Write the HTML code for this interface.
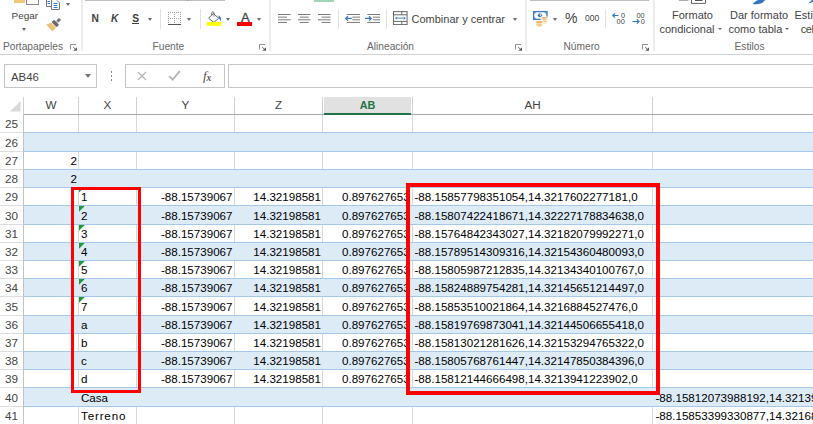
<!DOCTYPE html><html><head><meta charset="utf-8"><title>Excel</title><style>
html,body{margin:0;padding:0;background:#fff;}
body{width:813px;height:424px;overflow:hidden;position:relative;font-family:"Liberation Sans",sans-serif;color:#444;}
.a{position:absolute;}
.t{position:absolute;white-space:nowrap;line-height:1;}
.rb{font-size:11px;color:#444;}
.gl{font-size:10.2px;color:#666;}
.cell{font-size:11.6px;color:#000;}
.hd{font-size:11.7px;color:#444;}
.sep{position:absolute;width:1px;background:#e1e1e1;}
.gsep{position:absolute;width:1.7px;background:#ececec;}
.arr{position:absolute;width:0;height:0;border-left:2.7px solid transparent;border-right:2.7px solid transparent;border-top:3.2px solid #6a6a6a;margin:0.6px 0 0 0;}
</style></head><body>
<div class="a" style="left:0;top:54px;width:813px;height:1px;background:#d2d2d2"></div>
<div class="gsep" style="left:81px;top:0;height:50.5px"></div>
<div class="gsep" style="left:269px;top:0;height:50.5px"></div>
<div class="gsep" style="left:525px;top:0;height:50.5px"></div>
<div class="gsep" style="left:653px;top:0;height:50.5px"></div>
<div class="t gl" style="left:3px;top:42.3px;">Portapapeles</div>
<div class="t gl" style="left:152.5px;top:42.3px;">Fuente</div>
<div class="t gl" style="left:367px;top:42.3px;">Alineación</div>
<div class="t gl" style="left:563.5px;top:42.3px;">Número</div>
<div class="t gl" style="left:734.5px;top:42.3px;">Estilos</div>
<div class="t rb" style="left:11.5px;top:10.7px;font-size:9.95px">Pegar</div>
<div class="arr" style="left:21.6px;top:27.2px"></div>
<svg class="a" style="left:70.4px;top:44px" width="8" height="8" viewBox="0 0 8 8"><path d="M0.5 5.5V0.5H6" fill="none" stroke="#8f8f8f" stroke-width="1"/><path d="M7 3.2V6.8H3.4Z" fill="#5a5a5a"/><path d="M3.2 3L5.2 5" stroke="#5a5a5a" stroke-width="0.9"/></svg>
<svg class="a" style="left:258.9px;top:44px" width="8" height="8" viewBox="0 0 8 8"><path d="M0.5 5.5V0.5H6" fill="none" stroke="#8f8f8f" stroke-width="1"/><path d="M7 3.2V6.8H3.4Z" fill="#5a5a5a"/><path d="M3.2 3L5.2 5" stroke="#5a5a5a" stroke-width="0.9"/></svg>
<svg class="a" style="left:514.9px;top:44px" width="8" height="8" viewBox="0 0 8 8"><path d="M0.5 5.5V0.5H6" fill="none" stroke="#8f8f8f" stroke-width="1"/><path d="M7 3.2V6.8H3.4Z" fill="#5a5a5a"/><path d="M3.2 3L5.2 5" stroke="#5a5a5a" stroke-width="0.9"/></svg>
<svg class="a" style="left:642.4px;top:44px" width="8" height="8" viewBox="0 0 8 8"><path d="M0.5 5.5V0.5H6" fill="none" stroke="#8f8f8f" stroke-width="1"/><path d="M7 3.2V6.8H3.4Z" fill="#5a5a5a"/><path d="M3.2 3L5.2 5" stroke="#5a5a5a" stroke-width="0.9"/></svg>
<div class="a" style="left:13.8px;top:0;width:10.8px;height:2.6px;background:#f3c777"></div>
<div class="a" style="left:26px;top:-4.4px;width:10.6px;height:7px;border:1px solid #8a8a8a;background:#fff"></div>
<svg class="a" style="left:45px;top:0" width="18" height="11" viewBox="0 0 18 11"><path d="M1.5 0V6.5H6" fill="none" stroke="#777"/><path d="M6.5 0V9.5H14.5V3L12 0.5" fill="#fff" stroke="#777"/><path d="M8.5 3.5H12.5M8.5 5.5H12.5M8.5 7.5H12.5" stroke="#2b78c5"/><path d="M2.5 1.5H5M2.5 3.5H5" stroke="#2b78c5"/></svg>
<div class="arr" style="left:66px;top:2.2px"></div>
<svg class="a" style="left:44px;top:15px" width="20" height="18" viewBox="44 15 20 18"><g transform="translate(55.5 23.4) rotate(-45)"><path d="M-2.6 -3.9V3.4H-7.9L-7.4 -5.6Z" fill="#eec377"/><rect x="-2" y="-3.7" width="3.7" height="7.3" rx="1.2" fill="#6b6b6b"/><rect x="2.8" y="-1.5" width="3.6" height="3" rx="0.5" fill="#777"/><rect x="1.6" y="-0.7" width="1.6" height="1.4" fill="#999"/></g></svg>
<div class="a" style="left:85px;top:0;width:140px;height:1px;background:#bdbdbd"></div>
<div class="a" style="left:187px;top:0;width:1px;height:1px;background:#999"></div>
<div class="t rb" style="left:91.6px;top:13.6px;font-weight:bold;font-size:10.2px;color:#404040">N</div>
<div class="t rb" style="left:111px;top:13.6px;font-weight:bold;font-style:italic;font-size:10.2px;color:#404040">K</div>
<div class="t rb" style="left:132.3px;top:13.6px;font-weight:bold;font-size:10.2px;color:#404040">S</div>
<div class="a" style="left:132.2px;top:23.2px;width:6.8px;height:1px;background:#404040"></div>
<div class="arr" style="left:148px;top:17px"></div>
<div class="sep" style="left:160px;top:9px;height:20px"></div>
<svg class="a" style="left:168px;top:12px" width="13" height="13" viewBox="0 0 13 13" shape-rendering="crispEdges"><g fill="#a2a2a2"><rect x="0" y="0" width="1" height="1"/><rect x="0" y="0" width="1" height="1"/><rect x="0" y="6" width="1" height="1"/><rect x="6" y="0" width="1" height="1"/><rect x="0" y="12" width="1" height="1"/><rect x="12" y="0" width="1" height="1"/><rect x="2" y="0" width="1" height="1"/><rect x="0" y="2" width="1" height="1"/><rect x="2" y="6" width="1" height="1"/><rect x="6" y="2" width="1" height="1"/><rect x="2" y="12" width="1" height="1"/><rect x="12" y="2" width="1" height="1"/><rect x="4" y="0" width="1" height="1"/><rect x="0" y="4" width="1" height="1"/><rect x="4" y="6" width="1" height="1"/><rect x="6" y="4" width="1" height="1"/><rect x="4" y="12" width="1" height="1"/><rect x="12" y="4" width="1" height="1"/><rect x="6" y="0" width="1" height="1"/><rect x="0" y="6" width="1" height="1"/><rect x="6" y="6" width="1" height="1"/><rect x="6" y="6" width="1" height="1"/><rect x="6" y="12" width="1" height="1"/><rect x="12" y="6" width="1" height="1"/><rect x="8" y="0" width="1" height="1"/><rect x="0" y="8" width="1" height="1"/><rect x="8" y="6" width="1" height="1"/><rect x="6" y="8" width="1" height="1"/><rect x="8" y="12" width="1" height="1"/><rect x="12" y="8" width="1" height="1"/><rect x="10" y="0" width="1" height="1"/><rect x="0" y="10" width="1" height="1"/><rect x="10" y="6" width="1" height="1"/><rect x="6" y="10" width="1" height="1"/><rect x="10" y="12" width="1" height="1"/><rect x="12" y="10" width="1" height="1"/><rect x="12" y="0" width="1" height="1"/><rect x="0" y="12" width="1" height="1"/><rect x="12" y="6" width="1" height="1"/><rect x="6" y="12" width="1" height="1"/><rect x="12" y="12" width="1" height="1"/><rect x="12" y="12" width="1" height="1"/></g><rect x="0" y="11.5" width="13" height="1" fill="#555"/></svg>
<div class="arr" style="left:187px;top:17px"></div>
<div class="sep" style="left:199.5px;top:9px;height:20px"></div>
<svg class="a" style="left:206px;top:9px" width="17" height="17" viewBox="0 0 17 17"><path d="M12.6 6.2Q15.8 7.8 14.9 12.6Q13.8 10.2 12.6 9.6Z" fill="#3c78bd"/><path d="M2.6 9.2L7.4 4.4L12.6 9.2L7.8 13.6Z" fill="#fff" stroke="#666" stroke-width="1"/><path d="M5.8 6.5V3.4Q6.9 1.8 8 3.4V7.5" fill="none" stroke="#666" stroke-width="0.9"/><rect x="0.7" y="13" width="14.5" height="3.8" fill="#ffff00"/></svg>
<div class="arr" style="left:226.2px;top:17px"></div>
<div class="t rb" style="left:241px;top:10.5px;font-size:13px;color:#444;-webkit-text-stroke:0.3px #444">A</div>
<div class="a" style="left:237.4px;top:22px;width:14.6px;height:3.7px;background:#ff0000"></div>
<div class="arr" style="left:257.2px;top:17px"></div>
<div class="a" style="left:314px;top:0;width:20px;height:1.5px;background:#9fd5b7"></div>
<svg class="a" style="left:277.8px;top:14.2px" width="13" height="9" viewBox="0 0 13 9"><rect x="0" y="0" width="12.5" height="1" fill="#7a7a7a"/><rect x="0" y="2.65" width="9" height="1" fill="#7a7a7a"/><rect x="0" y="5.3" width="12.5" height="1" fill="#7a7a7a"/><rect x="0" y="7.95" width="9" height="1" fill="#7a7a7a"/></svg>
<svg class="a" style="left:298px;top:14.2px" width="13" height="9" viewBox="0 0 13 9"><rect x="0.0" y="0" width="12.5" height="1" fill="#7a7a7a"/><rect x="1.75" y="2.65" width="9" height="1" fill="#7a7a7a"/><rect x="0.0" y="5.3" width="12.5" height="1" fill="#7a7a7a"/><rect x="1.75" y="7.95" width="9" height="1" fill="#7a7a7a"/></svg>
<svg class="a" style="left:318px;top:14.2px" width="13" height="9" viewBox="0 0 13 9"><rect x="0.0" y="0" width="12.5" height="1" fill="#7a7a7a"/><rect x="3.5" y="2.65" width="9" height="1" fill="#7a7a7a"/><rect x="0.0" y="5.3" width="12.5" height="1" fill="#7a7a7a"/><rect x="3.5" y="7.95" width="9" height="1" fill="#7a7a7a"/></svg>
<div class="sep" style="left:338px;top:9px;height:20px"></div>
<svg class="a" style="left:345px;top:14.2px" width="16" height="9" viewBox="0 0 16 9"><rect x="1.8" y="0" width="13.2" height="1" fill="#7a7a7a"/><rect x="7.4" y="2.65" width="7.6" height="1" fill="#7a7a7a"/><rect x="7.4" y="5.3" width="7.6" height="1" fill="#7a7a7a"/><rect x="1.8" y="7.95" width="13.2" height="1" fill="#7a7a7a"/><path d="M6.8 4.45H0.8M3 2.2L0.7 4.45L3 6.7" fill="none" stroke="#3c78bd" stroke-width="1.2"/></svg>
<svg class="a" style="left:365px;top:14.2px" width="16" height="9" viewBox="0 0 16 9"><rect x="2.3" y="0" width="12.7" height="1" fill="#7a7a7a"/><rect x="7.8" y="2.65" width="7.2" height="1" fill="#7a7a7a"/><rect x="7.8" y="5.3" width="7.2" height="1" fill="#7a7a7a"/><rect x="2.3" y="7.95" width="12.7" height="1" fill="#7a7a7a"/><path d="M0 4.45H6.2M4 2.2L6.3 4.45L4 6.7" fill="none" stroke="#3c78bd" stroke-width="1.2"/></svg>
<div class="sep" style="left:386px;top:9px;height:20px"></div>
<svg class="a" style="left:393px;top:11px" width="15" height="14" viewBox="0 0 15 14"><rect x="0.5" y="0.6" width="13.6" height="13" fill="#fff" stroke="#6a6a6a"/><path d="M0.5 3.8H14M0.5 10.4H14M8.8 0.6V3.8M8.8 10.4V13.6" stroke="#6a6a6a" fill="none"/><path d="M2.6 7.1H12.2M4 5.9L2.6 7.1L4 8.3M10.8 5.9L12.2 7.1L10.8 8.3" stroke="#3c78bd" stroke-width="0.9" fill="none"/></svg>
<div class="t rb" style="left:411.5px;top:14px;">Combinar y centrar</div>
<div class="arr" style="left:512.5px;top:17px"></div>
<div class="a" style="left:530px;top:0;width:118.5px;height:1px;background:#bdbdbd"></div>
<svg class="a" style="left:532px;top:10px" width="17" height="17" viewBox="0 0 17 17"><rect x="1.6" y="1.6" width="13.4" height="7.8" fill="#fff" stroke="#3c78bd" stroke-width="1.3"/><path d="M2.2 2.2H4.2L2.2 4.2ZM14.4 2.2H12.4L14.4 4.2ZM2.2 8.8H4.2L2.2 6.8Z" fill="#3c78bd"/><circle cx="8" cy="5.3" r="2.1" fill="#3c78bd"/><circle cx="8.6" cy="4.9" r="0.8" fill="#fff"/><rect x="8.6" y="6.6" width="7.2" height="6.8" fill="#fff"/><ellipse cx="12.2" cy="7.9" rx="3" ry="0.95" fill="#e9b867"/><ellipse cx="12.2" cy="9.8" rx="3" ry="0.8" fill="#efc98a"/><ellipse cx="12.2" cy="11.5" rx="3" ry="0.8" fill="#efc98a"/><ellipse cx="12.2" cy="13" rx="2.6" ry="0.6" fill="#f3d6a6"/><rect x="3.4" y="10.6" width="7.8" height="6" fill="#fff"/><ellipse cx="7.3" cy="12" rx="3.5" ry="1.1" fill="#e9b867"/><ellipse cx="7.3" cy="14.1" rx="3.5" ry="0.9" fill="#efc98a"/><ellipse cx="7.3" cy="15.8" rx="3" ry="0.8" fill="#efc98a"/></svg>
<div class="arr" style="left:552.5px;top:17px"></div>
<div class="t rb" style="left:565px;top:11px;font-size:14px;color:#444">%</div>
<div class="t rb" style="left:585px;top:14px;font-size:8.5px;color:#444">000</div>
<div class="sep" style="left:605px;top:9px;height:19px"></div>
<svg class="a" style="left:612px;top:11px" width="14" height="14" viewBox="0 0 14 14"><text x="8.9" y="7" font-size="7.4" font-family="Liberation Sans, sans-serif" fill="#444">0</text><text x="4.6" y="13" font-size="7.4" font-family="Liberation Sans, sans-serif" fill="#444">00</text><path d="M6.5 4.5H0.8M3 2.3L0.8 4.5L3 6.7" stroke="#2b78c5" fill="none" stroke-width="1.2"/></svg>
<svg class="a" style="left:631.5px;top:11px" width="14" height="14" viewBox="0 0 14 14"><text x="4.4" y="7" font-size="7.4" font-family="Liberation Sans, sans-serif" fill="#444">00</text><text x="8.7" y="13" font-size="7.4" font-family="Liberation Sans, sans-serif" fill="#444">0</text><path d="M0.5 10.5H7M4.8 8.3L7 10.5L4.8 12.7" stroke="#2b78c5" fill="none" stroke-width="1.2"/></svg>
<svg class="a" style="left:678px;top:0" width="30" height="5" viewBox="0 0 30 5"><path d="M0.8 0.3H10.5" stroke="#9a9a9a"/><path d="M13.5 0V3.4H27.5V0" fill="#fff" stroke="#666"/><path d="M17 0.4H24.5" stroke="#555" stroke-width="1.2"/></svg>
<svg class="a" style="left:750px;top:0" width="18" height="6" viewBox="0 0 18 6"><path d="M2.6 4Q6 0.5 8 0H15.2Q13 3.2 8.5 4Q5 4.4 2.6 4Z" fill="#3575c0"/></svg>
<svg class="a" style="left:808px;top:0" width="5" height="4" viewBox="0 0 5 4"><path d="M0 3.5L4 0H5V2Z" fill="#2b78c5"/></svg>
<div class="t rb" style="left:672px;top:10px;">Formato</div>
<div class="t rb" style="left:659.5px;top:24px;">condicional</div>
<div class="arr" style="left:717.8px;top:27.3px;border-width:2.4px 2.2px 0 2.2px"></div>
<div class="t rb" style="left:730px;top:10px;">Dar formato</div>
<div class="t rb" style="left:728.5px;top:24px;">como tabla</div>
<div class="arr" style="left:784.5px;top:27.3px;border-width:2.4px 2.2px 0 2.2px"></div>
<div class="t rb" style="left:794.5px;top:10px;">Estilos de</div>
<div class="t rb" style="left:800.8px;top:24px;letter-spacing:-0.5px">celda</div>
<div class="a" style="left:4px;top:64px;width:91px;height:22px;border:1px solid #c6c6c6;box-sizing:content-box"></div>
<div class="t rb" style="left:11px;top:71.5px;font-size:11.4px;color:#444">AB46</div>
<div class="a" style="left:84.5px;top:73.5px;width:0;height:0;border-left:3.3px solid transparent;border-right:3.3px solid transparent;border-top:4px solid #777"></div>
<div class="a" style="left:110.5px;top:71px;width:1.5px;height:1.5px;background:#8a8a8a"></div>
<div class="a" style="left:110.5px;top:75px;width:1.5px;height:1.5px;background:#8a8a8a"></div>
<div class="a" style="left:110.5px;top:79px;width:1.5px;height:1.5px;background:#8a8a8a"></div>
<div class="a" style="left:125px;top:64px;width:98px;height:22px;border:1px solid #c6c6c6"></div>
<div class="a" style="left:228px;top:64px;width:600px;height:22px;border:1px solid #c6c6c6"></div>
<svg class="a" style="left:137px;top:71px" width="10" height="10" viewBox="0 0 10 10"><path d="M1 1L9 9M9 1L1 9" stroke="#b5b5b5" stroke-width="1.2" fill="none"/></svg>
<svg class="a" style="left:168px;top:70px" width="13" height="11" viewBox="0 0 13 11"><path d="M1.2 6.2L4.6 9.6L11.8 1.2" stroke="#b5b5b5" stroke-width="1.8" fill="none"/></svg>
<div class="t rb" style="left:203px;top:69px;font-family:'Liberation Serif',serif;font-size:13.5px;color:#555"><i>f</i><i style="font-size:9.5px;font-weight:bold;position:relative;top:0.5px;left:-0.3px">x</i></div>
<div class="a" style="left:23px;top:114px;width:800px;height:1px;background:#ababab"></div>
<svg class="a" style="left:10px;top:100.5px" width="11" height="11" viewBox="0 0 11 11"><path d="M10.5 0V10.5H0Z" fill="#d9d9d9"/></svg>
<div class="a" style="left:23px;top:97px;width:1px;height:17px;background:#d0d0d0"></div>
<div class="a" style="left:78px;top:97px;width:1px;height:17px;background:#d0d0d0"></div>
<div class="a" style="left:136px;top:97px;width:1px;height:17px;background:#d0d0d0"></div>
<div class="a" style="left:234px;top:97px;width:1px;height:17px;background:#d0d0d0"></div>
<div class="a" style="left:322px;top:97px;width:1px;height:17px;background:#d0d0d0"></div>
<div class="a" style="left:412px;top:97px;width:1px;height:17px;background:#d0d0d0"></div>
<div class="a" style="left:652px;top:97px;width:1px;height:17px;background:#d0d0d0"></div>
<div class="a" style="left:323.5px;top:97px;width:87.5px;height:16px;background:#e1e1e1"></div>
<div class="a" style="left:323.5px;top:112.5px;width:87.5px;height:2px;background:#217346"></div>
<div class="t hd" style="left:24px;width:54px;top:99.3px;text-align:center;">W</div>
<div class="t hd" style="left:79px;width:57px;top:99.3px;text-align:center;">X</div>
<div class="t hd" style="left:137px;width:97px;top:99.3px;text-align:center;">Y</div>
<div class="t hd" style="left:235px;width:87px;top:99.3px;text-align:center;">Z</div>
<div class="t hd" style="left:323px;width:89px;top:99.3px;text-align:center;font-weight:bold;color:#217346;font-size:10.8px;margin-top:0.5px;">AB</div>
<div class="t hd" style="left:413px;width:239px;top:99.3px;text-align:center;">AH</div>
<div class="a" style="left:78px;top:115px;width:1px;height:17px;background:#d8d8d8"></div>
<div class="a" style="left:136px;top:115px;width:1px;height:17px;background:#d8d8d8"></div>
<div class="a" style="left:234px;top:115px;width:1px;height:17px;background:#d8d8d8"></div>
<div class="a" style="left:322px;top:115px;width:1px;height:17px;background:#d8d8d8"></div>
<div class="a" style="left:412px;top:115px;width:1px;height:17px;background:#d8d8d8"></div>
<div class="a" style="left:652px;top:115px;width:1px;height:17px;background:#d8d8d8"></div>
<div class="a" style="left:0;top:132px;width:23px;height:1px;background:#dedede"></div>
<div class="t hd" style="left:0;width:23px;text-align:center;top:118px">25</div>
<div class="a" style="left:24px;top:132px;width:800px;height:20px;background:#ddebf7;border-top:1px solid #a6c8e9;border-bottom:1px solid #a6c8e9;box-sizing:border-box"></div>
<div class="a" style="left:0;top:151px;width:23px;height:1px;background:#dedede"></div>
<div class="t hd" style="left:0;width:23px;text-align:center;top:137px">26</div>
<div class="a" style="left:78px;top:152px;width:1px;height:17px;background:#d8d8d8"></div>
<div class="a" style="left:136px;top:152px;width:1px;height:17px;background:#d8d8d8"></div>
<div class="a" style="left:234px;top:152px;width:1px;height:17px;background:#d8d8d8"></div>
<div class="a" style="left:322px;top:152px;width:1px;height:17px;background:#d8d8d8"></div>
<div class="a" style="left:412px;top:152px;width:1px;height:17px;background:#d8d8d8"></div>
<div class="a" style="left:652px;top:152px;width:1px;height:17px;background:#d8d8d8"></div>
<div class="a" style="left:0;top:169px;width:23px;height:1px;background:#dedede"></div>
<div class="t hd" style="left:0;width:23px;text-align:center;top:155px">27</div>
<div class="t cell" style="left:24px;width:53px;text-align:right;top:155px">2</div>
<div class="a" style="left:24px;top:169px;width:800px;height:19px;background:#ddebf7;border-top:1px solid #a6c8e9;border-bottom:1px solid #a6c8e9;box-sizing:border-box"></div>
<div class="a" style="left:0;top:187px;width:23px;height:1px;background:#dedede"></div>
<div class="t hd" style="left:0;width:23px;text-align:center;top:173px">28</div>
<div class="t cell" style="left:24px;width:53px;text-align:right;top:173px">2</div>
<div class="a" style="left:78px;top:188px;width:1px;height:17px;background:#d8d8d8"></div>
<div class="a" style="left:136px;top:188px;width:1px;height:17px;background:#d8d8d8"></div>
<div class="a" style="left:234px;top:188px;width:1px;height:17px;background:#d8d8d8"></div>
<div class="a" style="left:322px;top:188px;width:1px;height:17px;background:#d8d8d8"></div>
<div class="a" style="left:412px;top:188px;width:1px;height:17px;background:#d8d8d8"></div>
<div class="a" style="left:652px;top:188px;width:1px;height:17px;background:#d8d8d8"></div>
<div class="a" style="left:0;top:205px;width:23px;height:1px;background:#dedede"></div>
<div class="t hd" style="left:0;width:23px;text-align:center;top:191px">29</div>
<div class="t cell" style="left:81px;top:191px">1</div>
<div class="t cell" style="left:137px;width:95.5px;text-align:right;top:191px">-88.15739067</div>
<div class="t cell" style="left:235px;width:86px;text-align:right;top:191px">14.32198581</div>
<div class="t cell" style="left:342px;width:71px;overflow:hidden;top:191px">0.897627653</div>
<div class="t cell" style="left:414.5px;top:191px">-88.15857798351054,14.3217602277181,0</div>
<svg class="a" style="left:78.5px;top:187.5px" width="6" height="6" viewBox="0 0 6 6"><path d="M0 0H4.6L0 4.6Z" fill="#1d9a3c"/></svg>
<div class="a" style="left:24px;top:205px;width:800px;height:20px;background:#ddebf7;border-top:1px solid #a6c8e9;border-bottom:1px solid #a6c8e9;box-sizing:border-box"></div>
<div class="a" style="left:0;top:224px;width:23px;height:1px;background:#dedede"></div>
<div class="t hd" style="left:0;width:23px;text-align:center;top:210px">30</div>
<div class="t cell" style="left:81px;top:210px">2</div>
<div class="t cell" style="left:137px;width:95.5px;text-align:right;top:210px">-88.15739067</div>
<div class="t cell" style="left:235px;width:86px;text-align:right;top:210px">14.32198581</div>
<div class="t cell" style="left:342px;width:71px;overflow:hidden;top:210px">0.897627653</div>
<div class="t cell" style="left:414.5px;top:210px">-88.15807422418671,14.32227178834638,0</div>
<svg class="a" style="left:78.5px;top:205.5px" width="6" height="6" viewBox="0 0 6 6"><path d="M0 0H5.8L0 5.8Z" fill="#1d9a3c"/></svg>
<div class="a" style="left:78px;top:225px;width:1px;height:17px;background:#d8d8d8"></div>
<div class="a" style="left:136px;top:225px;width:1px;height:17px;background:#d8d8d8"></div>
<div class="a" style="left:234px;top:225px;width:1px;height:17px;background:#d8d8d8"></div>
<div class="a" style="left:322px;top:225px;width:1px;height:17px;background:#d8d8d8"></div>
<div class="a" style="left:412px;top:225px;width:1px;height:17px;background:#d8d8d8"></div>
<div class="a" style="left:652px;top:225px;width:1px;height:17px;background:#d8d8d8"></div>
<div class="a" style="left:0;top:242px;width:23px;height:1px;background:#dedede"></div>
<div class="t hd" style="left:0;width:23px;text-align:center;top:228px">31</div>
<div class="t cell" style="left:81px;top:228px">3</div>
<div class="t cell" style="left:137px;width:95.5px;text-align:right;top:228px">-88.15739067</div>
<div class="t cell" style="left:235px;width:86px;text-align:right;top:228px">14.32198581</div>
<div class="t cell" style="left:342px;width:71px;overflow:hidden;top:228px">0.897627653</div>
<div class="t cell" style="left:414.5px;top:228px">-88.15764842343027,14.32182079992271,0</div>
<svg class="a" style="left:78.5px;top:224.5px" width="6" height="6" viewBox="0 0 6 6"><path d="M0 0H5.8L0 5.8Z" fill="#1d9a3c"/></svg>
<div class="a" style="left:24px;top:242px;width:800px;height:19px;background:#ddebf7;border-top:1px solid #a6c8e9;border-bottom:1px solid #a6c8e9;box-sizing:border-box"></div>
<div class="a" style="left:0;top:260px;width:23px;height:1px;background:#dedede"></div>
<div class="t hd" style="left:0;width:23px;text-align:center;top:246px">32</div>
<div class="t cell" style="left:81px;top:246px">4</div>
<div class="t cell" style="left:137px;width:95.5px;text-align:right;top:246px">-88.15739067</div>
<div class="t cell" style="left:235px;width:86px;text-align:right;top:246px">14.32198581</div>
<div class="t cell" style="left:342px;width:71px;overflow:hidden;top:246px">0.897627653</div>
<div class="t cell" style="left:414.5px;top:246px">-88.15789514309316,14.32154360480093,0</div>
<svg class="a" style="left:78.5px;top:242.5px" width="6" height="6" viewBox="0 0 6 6"><path d="M0 0H5.8L0 5.8Z" fill="#1d9a3c"/></svg>
<div class="a" style="left:78px;top:261px;width:1px;height:17px;background:#d8d8d8"></div>
<div class="a" style="left:136px;top:261px;width:1px;height:17px;background:#d8d8d8"></div>
<div class="a" style="left:234px;top:261px;width:1px;height:17px;background:#d8d8d8"></div>
<div class="a" style="left:322px;top:261px;width:1px;height:17px;background:#d8d8d8"></div>
<div class="a" style="left:412px;top:261px;width:1px;height:17px;background:#d8d8d8"></div>
<div class="a" style="left:652px;top:261px;width:1px;height:17px;background:#d8d8d8"></div>
<div class="a" style="left:0;top:278px;width:23px;height:1px;background:#dedede"></div>
<div class="t hd" style="left:0;width:23px;text-align:center;top:264px">33</div>
<div class="t cell" style="left:81px;top:264px">5</div>
<div class="t cell" style="left:137px;width:95.5px;text-align:right;top:264px">-88.15739067</div>
<div class="t cell" style="left:235px;width:86px;text-align:right;top:264px">14.32198581</div>
<div class="t cell" style="left:342px;width:71px;overflow:hidden;top:264px">0.897627653</div>
<div class="t cell" style="left:414.5px;top:264px">-88.15805987212835,14.32134340100767,0</div>
<svg class="a" style="left:78.5px;top:260.5px" width="6" height="6" viewBox="0 0 6 6"><path d="M0 0H5.8L0 5.8Z" fill="#1d9a3c"/></svg>
<div class="a" style="left:24px;top:278px;width:800px;height:19px;background:#ddebf7;border-top:1px solid #a6c8e9;border-bottom:1px solid #a6c8e9;box-sizing:border-box"></div>
<div class="a" style="left:0;top:296px;width:23px;height:1px;background:#dedede"></div>
<div class="t hd" style="left:0;width:23px;text-align:center;top:282px">34</div>
<div class="t cell" style="left:81px;top:282px">6</div>
<div class="t cell" style="left:137px;width:95.5px;text-align:right;top:282px">-88.15739067</div>
<div class="t cell" style="left:235px;width:86px;text-align:right;top:282px">14.32198581</div>
<div class="t cell" style="left:342px;width:71px;overflow:hidden;top:282px">0.897627653</div>
<div class="t cell" style="left:414.5px;top:282px">-88.15824889754281,14.32145651214497,0</div>
<svg class="a" style="left:78.5px;top:278.5px" width="6" height="6" viewBox="0 0 6 6"><path d="M0 0H5.8L0 5.8Z" fill="#1d9a3c"/></svg>
<div class="a" style="left:78px;top:297px;width:1px;height:18px;background:#d8d8d8"></div>
<div class="a" style="left:136px;top:297px;width:1px;height:18px;background:#d8d8d8"></div>
<div class="a" style="left:234px;top:297px;width:1px;height:18px;background:#d8d8d8"></div>
<div class="a" style="left:322px;top:297px;width:1px;height:18px;background:#d8d8d8"></div>
<div class="a" style="left:412px;top:297px;width:1px;height:18px;background:#d8d8d8"></div>
<div class="a" style="left:652px;top:297px;width:1px;height:18px;background:#d8d8d8"></div>
<div class="a" style="left:0;top:315px;width:23px;height:1px;background:#dedede"></div>
<div class="t hd" style="left:0;width:23px;text-align:center;top:301px">35</div>
<div class="t cell" style="left:81px;top:301px">7</div>
<div class="t cell" style="left:137px;width:95.5px;text-align:right;top:301px">-88.15739067</div>
<div class="t cell" style="left:235px;width:86px;text-align:right;top:301px">14.32198581</div>
<div class="t cell" style="left:342px;width:71px;overflow:hidden;top:301px">0.897627653</div>
<div class="t cell" style="left:414.5px;top:301px">-88.15853510021864,14.3216884527476,0</div>
<svg class="a" style="left:78.5px;top:296.5px" width="6" height="6" viewBox="0 0 6 6"><path d="M0 0H5.8L0 5.8Z" fill="#1d9a3c"/></svg>
<div class="a" style="left:24px;top:315px;width:800px;height:19px;background:#ddebf7;border-top:1px solid #a6c8e9;border-bottom:1px solid #a6c8e9;box-sizing:border-box"></div>
<div class="a" style="left:0;top:333px;width:23px;height:1px;background:#dedede"></div>
<div class="t hd" style="left:0;width:23px;text-align:center;top:319px">36</div>
<div class="t cell" style="left:81px;top:319px">a</div>
<div class="t cell" style="left:137px;width:95.5px;text-align:right;top:319px">-88.15739067</div>
<div class="t cell" style="left:235px;width:86px;text-align:right;top:319px">14.32198581</div>
<div class="t cell" style="left:342px;width:71px;overflow:hidden;top:319px">0.897627653</div>
<div class="t cell" style="left:414.5px;top:319px">-88.15819769873041,14.32144506655418,0</div>
<div class="a" style="left:78px;top:334px;width:1px;height:17px;background:#d8d8d8"></div>
<div class="a" style="left:136px;top:334px;width:1px;height:17px;background:#d8d8d8"></div>
<div class="a" style="left:234px;top:334px;width:1px;height:17px;background:#d8d8d8"></div>
<div class="a" style="left:322px;top:334px;width:1px;height:17px;background:#d8d8d8"></div>
<div class="a" style="left:412px;top:334px;width:1px;height:17px;background:#d8d8d8"></div>
<div class="a" style="left:652px;top:334px;width:1px;height:17px;background:#d8d8d8"></div>
<div class="a" style="left:0;top:351px;width:23px;height:1px;background:#dedede"></div>
<div class="t hd" style="left:0;width:23px;text-align:center;top:337px">37</div>
<div class="t cell" style="left:81px;top:337px">b</div>
<div class="t cell" style="left:137px;width:95.5px;text-align:right;top:337px">-88.15739067</div>
<div class="t cell" style="left:235px;width:86px;text-align:right;top:337px">14.32198581</div>
<div class="t cell" style="left:342px;width:71px;overflow:hidden;top:337px">0.897627653</div>
<div class="t cell" style="left:414.5px;top:337px">-88.15813021281626,14.32153294765322,0</div>
<div class="a" style="left:24px;top:351px;width:800px;height:19px;background:#ddebf7;border-top:1px solid #a6c8e9;border-bottom:1px solid #a6c8e9;box-sizing:border-box"></div>
<div class="a" style="left:0;top:369px;width:23px;height:1px;background:#dedede"></div>
<div class="t hd" style="left:0;width:23px;text-align:center;top:355px">38</div>
<div class="t cell" style="left:81px;top:355px">c</div>
<div class="t cell" style="left:137px;width:95.5px;text-align:right;top:355px">-88.15739067</div>
<div class="t cell" style="left:235px;width:86px;text-align:right;top:355px">14.32198581</div>
<div class="t cell" style="left:342px;width:71px;overflow:hidden;top:355px">0.897627653</div>
<div class="t cell" style="left:414.5px;top:355px">-88.15805768761447,14.32147850384396,0</div>
<div class="a" style="left:78px;top:370px;width:1px;height:17px;background:#d8d8d8"></div>
<div class="a" style="left:136px;top:370px;width:1px;height:17px;background:#d8d8d8"></div>
<div class="a" style="left:234px;top:370px;width:1px;height:17px;background:#d8d8d8"></div>
<div class="a" style="left:322px;top:370px;width:1px;height:17px;background:#d8d8d8"></div>
<div class="a" style="left:412px;top:370px;width:1px;height:17px;background:#d8d8d8"></div>
<div class="a" style="left:652px;top:370px;width:1px;height:17px;background:#d8d8d8"></div>
<div class="a" style="left:0;top:387px;width:23px;height:1px;background:#dedede"></div>
<div class="t hd" style="left:0;width:23px;text-align:center;top:373px">39</div>
<div class="t cell" style="left:81px;top:373px">d</div>
<div class="t cell" style="left:137px;width:95.5px;text-align:right;top:373px">-88.15739067</div>
<div class="t cell" style="left:235px;width:86px;text-align:right;top:373px">14.32198581</div>
<div class="t cell" style="left:342px;width:71px;overflow:hidden;top:373px">0.897627653</div>
<div class="t cell" style="left:414.5px;top:373px">-88.15812144666498,14.3213941223902,0</div>
<div class="a" style="left:24px;top:387px;width:800px;height:20px;background:#ddebf7;border-top:1px solid #a6c8e9;border-bottom:1px solid #a6c8e9;box-sizing:border-box"></div>
<div class="a" style="left:0;top:406px;width:23px;height:1px;background:#dedede"></div>
<div class="t hd" style="left:0;width:23px;text-align:center;top:392px">40</div>
<div class="t cell" style="left:81px;top:392px">Casa</div>
<div class="t cell" style="left:655.5px;top:392px">-88.15812073988192,14.32139412239020,0</div>
<div class="a" style="left:78px;top:407px;width:1px;height:17px;background:#d8d8d8"></div>
<div class="a" style="left:136px;top:407px;width:1px;height:17px;background:#d8d8d8"></div>
<div class="a" style="left:234px;top:407px;width:1px;height:17px;background:#d8d8d8"></div>
<div class="a" style="left:322px;top:407px;width:1px;height:17px;background:#d8d8d8"></div>
<div class="a" style="left:412px;top:407px;width:1px;height:17px;background:#d8d8d8"></div>
<div class="a" style="left:652px;top:407px;width:1px;height:17px;background:#d8d8d8"></div>
<div class="a" style="left:0;top:424px;width:23px;height:1px;background:#dedede"></div>
<div class="t hd" style="left:0;width:23px;text-align:center;top:410px">41</div>
<div class="t cell" style="left:81px;top:410px;letter-spacing:0.85px">Terreno</div>
<div class="t cell" style="left:655.5px;top:410px">-88.15853399330877,14.32168845274760,0</div>
<div class="a" style="left:22.5px;top:114px;width:1.5px;height:330px;background:#c2c2c2"></div>
<div class="a" style="left:71px;top:187px;width:69.8px;height:205.5px;border:3.9px solid #f00;box-sizing:border-box"></div>
<div class="a" style="left:406.25px;top:182.5px;width:254px;height:212px;border:4px solid #f00;box-sizing:border-box"></div>
</body></html>
